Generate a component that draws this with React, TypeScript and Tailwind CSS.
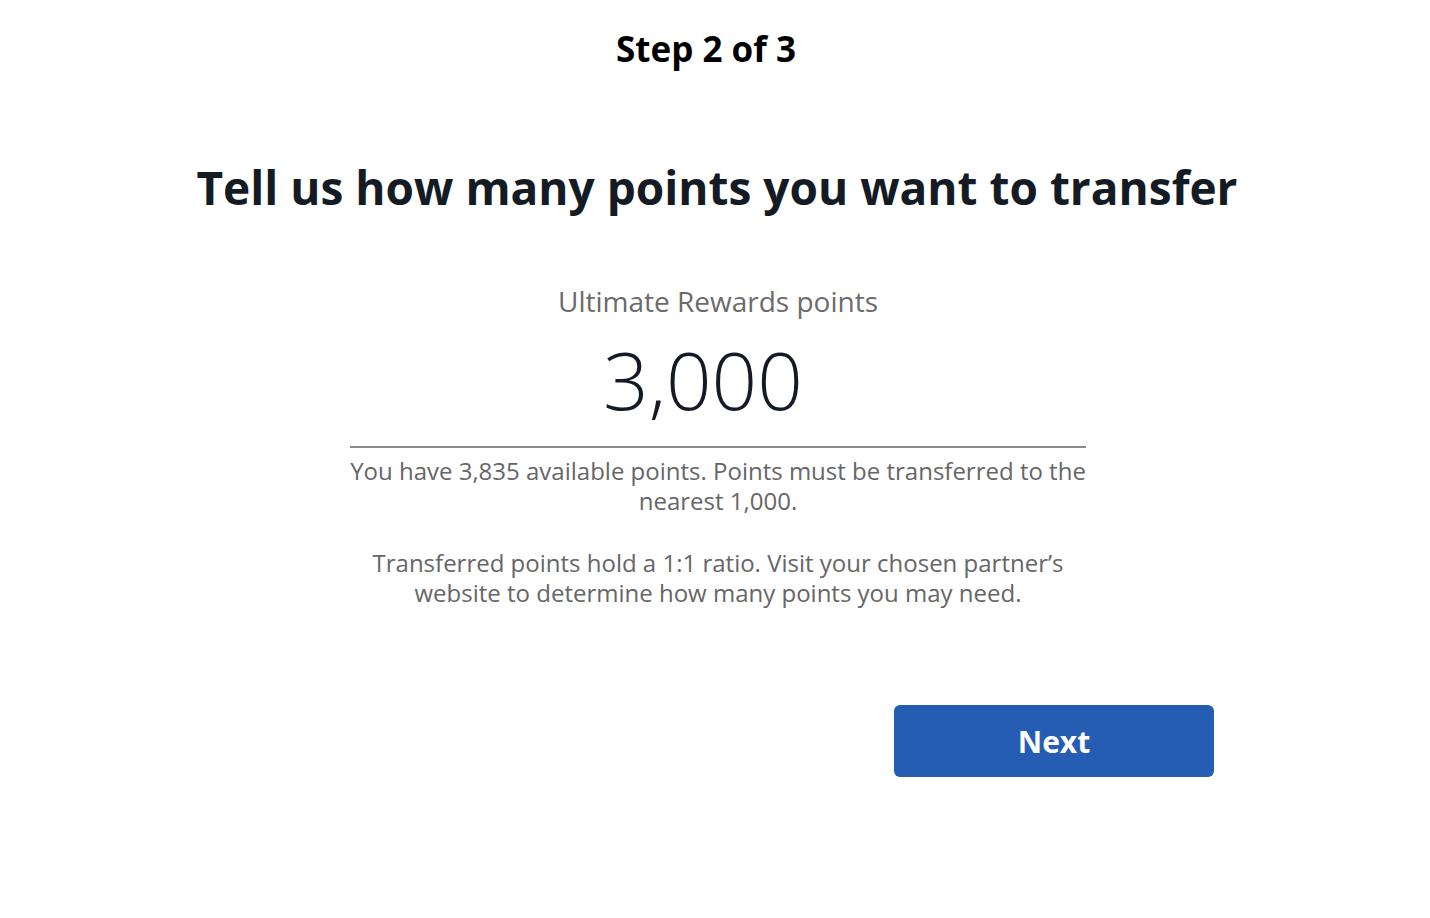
export default function App() {
  return (
    <div className="min-h-screen bg-white font-['Open_Sans',sans-serif]">
      <div className="flex flex-col items-center">
        <p className="mt-[27px] text-[35px] font-bold text-black leading-[44px] mr-[18px]">Step 2 of 3</p>

        <h1 className="mt-[86px] text-[46px] font-bold text-[#141b24] leading-[60px] ml-[4px]">
          Tell us how many points you want to transfer
        </h1>

        <div className="mt-[66px] ml-[6px] w-[736px] flex flex-col items-center">
          <p className="text-[28px] text-[#6b6b6b] leading-[36px]">Ultimate Rewards points</p>
          <div className="mt-[10px] w-full border-b-2 border-[#8a8a8a] pb-[17px] text-center">
            <span className="text-[80px] font-light text-[#141b24] leading-[100px] mr-[30px]">3,000</span>
          </div>
          <p className="mt-[8px] w-[750px] text-[24px] text-[#666666] leading-[30px] text-center">
            You have 3,835 available points. Points must be transferred to the nearest 1,000.
          </p>
          <p className="mt-[32px] px-[22px] text-[24px] text-[#666666] leading-[30px] text-center">
            Transferred points hold a 1:1 ratio. Visit your chosen partner’s website to determine how many points you may need.
          </p>
        </div>

        <div className="mt-[97px] w-full flex justify-end pr-[216px]">
          <button className="w-[320px] h-[72px] rounded-[6px] bg-[#255db3] text-white text-[30px] font-bold">
            Next
          </button>
        </div>
      </div>
    </div>
  )
}
